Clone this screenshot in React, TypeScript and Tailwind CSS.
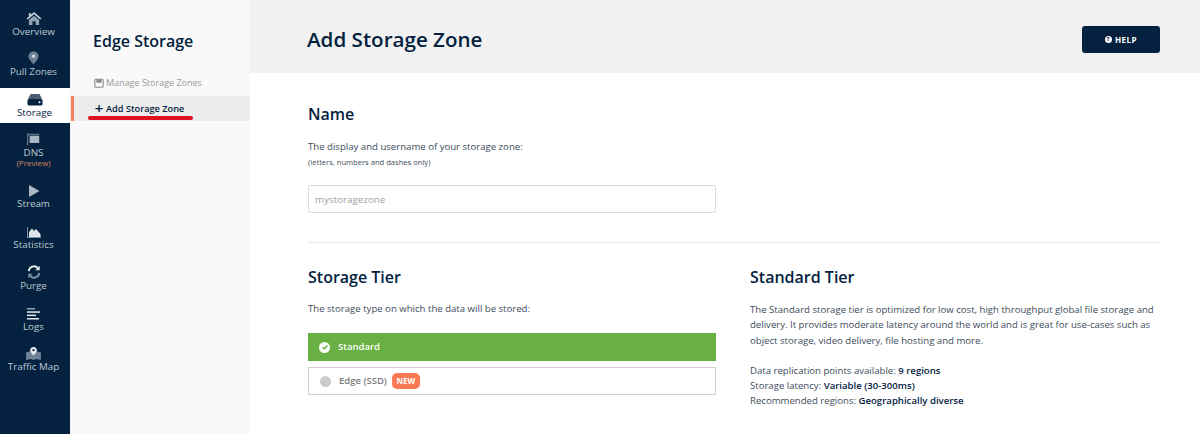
import { ReactNode } from "react";

const Home = () => (
  <svg viewBox="0 0 16 14" className="w-4 h-[13px]" fill="#8fa1b3">
    <path d="M8 0 L16 7 L14.6 8 L8 2.5 L1.4 8 L0 7 L2.5 4.8 V1 H4.5 V3 Z" fill="#c3ced8" />
    <path d="M8 4 L13.5 8.6 V14 H9.7 V10 H6.3 V14 H2.5 V8.6 Z" />
  </svg>
);
const Pin = () => (
  <svg viewBox="0 0 12 14" className="w-[11px] h-[14px]">
    <path d="M6 0 C2.6 0 .5 2.4 .5 5.2 C.5 8.6 6 14 6 14 C6 14 11.5 8.6 11.5 5.2 C11.5 2.4 9.4 0 6 0 Z" fill="#6d8094" />
    <circle cx="6" cy="5" r="1.8" fill="#cfd7de" />
  </svg>
);
const Drive = () => (
  <svg viewBox="0 0 16 12" className="w-4 h-3">
    <path d="M3.5 0 H12.5 L15 5 H1 Z" fill="#4a5d72" />
    <rect x="0.5" y="5" width="15" height="6.5" rx="1.5" fill="#04223f" />
    <circle cx="12.5" cy="8.3" r="1" fill="#fff" />
  </svg>
);
const Flag = () => (
  <svg viewBox="0 0 16 14" className="w-[14px] h-[14px]">
    <rect x="0" y="0" width="1.4" height="14" fill="#5f7387" />
    <rect x="0" y="1" width="14" height="2" fill="#5f7387" />
    <rect x="3" y="3.5" width="11" height="8" fill="#a9b6c3" />
  </svg>
);
const Play = () => (
  <svg viewBox="0 0 12 12" className="w-3 h-3">
    <path d="M1 0 L11.5 6 L1 12 Z" fill="#aab7c4" />
  </svg>
);
const Chart = () => (
  <svg viewBox="0 0 14 11" className="w-[14px] h-[11px]">
    <path d="M0 0 H1 V10 H14 V11 H0 Z" fill="#7d8fa1" />
    <path d="M2 10 V5 L5 1.5 L7 4 L9 2 L13.5 7 V10 Z" fill="#dfe5ea" />
  </svg>
);
const Refresh = () => (
  <svg viewBox="0 0 16 16" className="w-[14px] h-[14px]" fill="none" strokeWidth="2.2">
    <path d="M2 7 A6 6 0 0 1 12.5 3.6" stroke="#e7ebef" />
    <path d="M14.5 .8 V6 H9.5 Z" fill="#e7ebef" />
    <path d="M14 9 A6 6 0 0 1 3.5 12.4" stroke="#7f91a3" />
    <path d="M1.5 15.2 V10 H6.5 Z" fill="#7f91a3" />
  </svg>
);
const Lines = () => (
  <svg viewBox="0 0 13 12" className="w-[13px] h-3">
    <rect y="0" width="8" height="1.5" fill="#8fa1b3" />
    <rect y="3.3" width="13" height="1.5" fill="#e7ebef" />
    <rect y="6.6" width="9" height="1.5" fill="#e7ebef" />
    <rect y="10" width="12" height="1.5" fill="#e7ebef" />
  </svg>
);
const MapPin = () => (
  <svg viewBox="0 0 16 14" className="w-[15px] h-[13px]">
    <path d="M0 6 L5 4.5 L11 4.5 L16 6 V14 L11 12.8 L8 14 L5 12.8 L0 14 Z" fill="#6f8295" />
    <path d="M8 0 C5.8 0 4.4 1.6 4.4 3.4 C4.4 5.6 8 9 8 9 C8 9 11.6 5.6 11.6 3.4 C11.6 1.6 10.2 0 8 0 Z" fill="#e7ebef" />
    <circle cx="8" cy="3.4" r="1.2" fill="#04223f" />
  </svg>
);
const Box = () => (
  <svg viewBox="0 0 12 12" className="w-[10px] h-[10px]" fill="none" stroke="#8b8b8b" strokeWidth="1.3">
    <rect x="1" y="1.5" width="10" height="9.5" rx="1.2" />
    <path d="M3.5 1.5 V5 H8.5 V1.5" fill="#8b8b8b" />
  </svg>
);

const NavItem = ({ icon, label, h = "h-[41px]" }: { icon: ReactNode; label: string; h?: string }) => (
  <div className={`${h} flex flex-col items-center pr-[3px]`}>
    <div className="h-[14px] flex items-end justify-center">{icon}</div>
    <span className="text-[9.8px] leading-[14px] text-[#bcc8d3]">{label}</span>
  </div>
);

export default function App() {
  return (
    <div
      className="flex h-[434px] w-[1200px] overflow-hidden bg-white text-[#04223f]"
      style={{ fontFamily: '"Open Sans", sans-serif' }}
    >
      <nav className="w-[70px] shrink-0 bg-[#04223f] pt-[11px]">
        <NavItem icon={<Home />} label="Overview" h="h-[40px]" />
        <NavItem icon={<Pin />} label="Pull Zones" h="h-[37px]" />
        <div className="h-[35px] bg-white flex flex-col items-center pt-[6px] pr-[1px]">
          <Drive />
          <span className="text-[9.8px] leading-[14px] text-[#04223f]">Storage</span>
        </div>
        <div className="h-[55px] flex flex-col items-center pt-[9px] pr-[3px]">
          <Flag />
          <span className="text-[9.8px] leading-[13px] text-[#bcc8d3]">DNS</span>
          <span className="text-[8px] leading-[8px] text-[#d9825f]">(Preview)</span>
        </div>
        <div className="pt-[5px]">
          <NavItem icon={<Play />} label="Stream" />
          <NavItem icon={<Chart />} label="Statistics" />
          <NavItem icon={<Refresh />} label="Purge" />
          <NavItem icon={<Lines />} label="Logs" h="h-[40px]" />
          <NavItem icon={<MapPin />} label="Traffic Map" />
        </div>
      </nav>

      <aside className="w-[180px] shrink-0 bg-[#f9f9f9] border-l border-[#eef0f2] pt-[30px]">
        <h2 className="pl-[22px] text-[16px] leading-[22px] font-semibold">Edge Storage</h2>
        <div className="mt-[19px] pl-[23px] h-[24px] flex items-center gap-[2px] text-[9px] text-[#9a9a9a]">
          <Box />
          <span>Manage Storage Zones</span>
        </div>
        <div className="relative mt-[1px] h-[25px] bg-[#ececec] pl-[23px] flex items-center gap-[2px] text-[9.2px] font-semibold">
          <span className="absolute left-0 top-0 bottom-0 w-[3px] bg-[#f4845f]" />
          <span className="text-[15px] leading-none w-[10px] text-center font-semibold">+</span>
          <span>Add Storage Zone</span>
          <span className="absolute left-[17px] top-[20px] w-[105px] h-[4px] rounded-full bg-[#e0101f]" />
        </div>
      </aside>

      <main className="flex-1 min-w-0">
        <header className="h-[73px] bg-[#f1f1f1] flex items-center justify-between pt-[6px] pl-[57px] pr-[40px]">
          <h1 className="text-[20.6px] leading-[30px] font-semibold -mt-[2px]">Add Storage Zone</h1>
          <button className="w-[78px] h-[27px] rounded-[3px] bg-[#04223f] text-white text-[8px] font-bold tracking-[0.5px] flex items-center justify-center gap-[3px]">
            <span className="w-[7px] h-[7px] rounded-full bg-white text-[#04223f] text-[6px] leading-[7px] text-center">?</span>
            HELP
          </button>
        </header>

        <div className="pl-[58px] pr-[40px]">
          <section className="pt-[31px] h-[170px] border-b border-[#e9e9e9]">
            <h2 className="text-[16px] leading-[20px] font-semibold">Name</h2>
            <p className="mt-[16px] text-[9.6px] leading-[14px] text-[#3d4d5c]">The display and username of your storage zone:</p>
            <p className="mt-[3px] text-[7.6px] leading-[10px] text-[#3d4d5c]">(letters, numbers and dashes only)</p>
            <input
              readOnly
              placeholder="mystoragezone"
              className="mt-[18px] block w-[408px] h-[28px] border border-[#dcdcdc] rounded-[2px] px-[6px] text-[9.8px] placeholder:text-[#a0a0a0] outline-none"
            />
          </section>

          <section className="pt-[24px] flex">
            <div className="w-[442px] shrink-0">
              <h2 className="text-[16px] leading-[20px] font-semibold">Storage Tier</h2>
              <p className="mt-[15px] text-[9.6px] leading-[14px] text-[#3d4d5c]">The storage type on which the data will be stored:</p>
              <div className="mt-[17px] w-[408px] h-[28px] bg-[#67b041] flex items-center pl-[11px] gap-[8px] text-white text-[9.5px] font-semibold">
                <span className="w-[11px] h-[11px] rounded-full bg-white flex items-center justify-center">
                  <svg viewBox="0 0 10 10" className="w-[8px] h-[8px]" fill="none" stroke="#67b041" strokeWidth="1.8">
                    <path d="M2 5.2 L4.2 7.2 L8 3" />
                  </svg>
                </span>
                Standard
              </div>
              <div className="mt-[6px] w-[408px] h-[28px] border border-[#cfcfcf] flex items-center pl-[11px] text-[#7b7b7b] text-[9.5px] font-semibold">
                <span className="w-[11px] h-[11px] rounded-full bg-[#cccccc] mr-[8px]" />
                Edge (SSD)
                <span className="ml-[5px] h-[16px] w-[28px] rounded-[5px] bg-[#fb7a55] text-white text-[8px] font-bold flex items-center justify-center">NEW</span>
              </div>
            </div>
            <div className="flex-1 min-w-0">
              <h2 className="text-[16px] leading-[20px] font-semibold">Standard Tier</h2>
              <p className="mt-[15px] text-[9.6px] leading-[15.3px] text-[#3d4d5c]">
                The Standard storage tier is optimized for low cost, high throughput global file storage and delivery. It provides moderate latency around the world and is great for use-cases such as object storage, video delivery, file hosting and more.
              </p>
              <p className="mt-[15px] text-[9.6px] leading-[15.3px] text-[#3d4d5c]">
                Data replication points available: <b className="font-semibold text-[#04223f]">9 regions</b><br />
                Storage latency: <b className="font-semibold text-[#04223f]">Variable (30-300ms)</b><br />
                Recommended regions: <b className="font-semibold text-[#04223f]">Geographically diverse</b>
              </p>
            </div>
          </section>
        </div>
      </main>
    </div>
  );
}
